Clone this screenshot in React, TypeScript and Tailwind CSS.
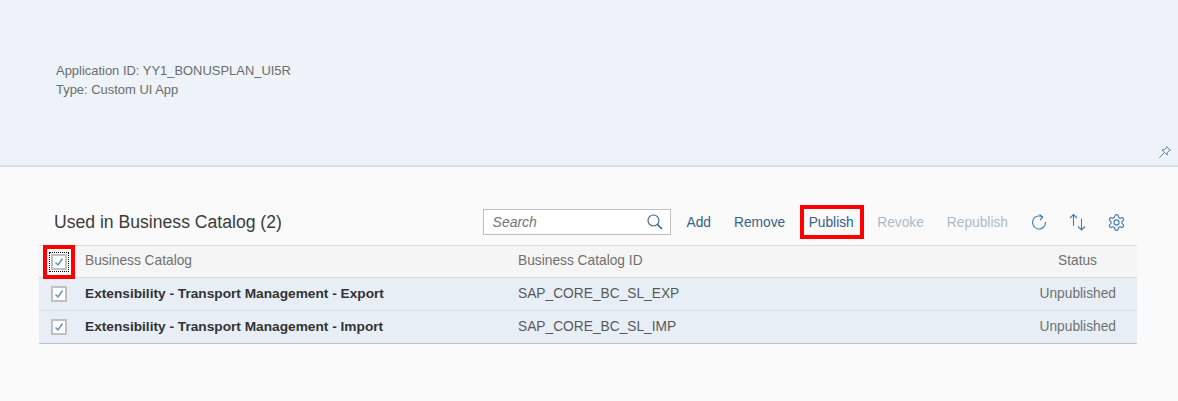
const catalogs = [
  { name: "Extensibility - Transport Management - Export", id: "SAP_CORE_BC_SL_EXP" },
  { name: "Extensibility - Transport Management - Import", id: "SAP_CORE_BC_SL_IMP" },
];

function Check({ focus }: { focus?: boolean }) {
  return (
    <span className={`flex h-4 w-4 items-center justify-center border-2 border-[#bfbfbf] bg-white ${focus ? "outline-1 outline-dotted outline-black outline-offset-1" : ""}`}>
      <svg viewBox="0 0 12 12" className="h-3 w-3" fill="none" stroke="#5a8fbd" strokeWidth="1.4">
        <path d="M2.5 6.5 L5 9 L9.5 2.5" />
      </svg>
    </span>
  );
}

function Row({ name, id }: { name: string; id: string }) {
  return (
    <div className="flex h-[33px] items-center border-b border-[#d8e0e8] bg-[#e7eef6] last:border-[#b9c4d0]">
      <div className="flex w-[40px] justify-center"><Check /></div>
      <div className="ml-[6px] w-[433px] pt-px text-[13.7px] font-bold text-[#333333]">{name}</div>
      <div className="flex-1 text-[13.75px] text-[#5a5a5a]">{id}</div>
      <div className="pr-[21px] pt-px text-[13.75px] text-[#707070]">Unpublished</div>
    </div>
  );
}

export default function App() {
  return (
    <div className="h-[401px] w-[1178px] overflow-hidden bg-[#fafafa] font-['Liberation_Sans',sans-serif]">
      <header className="flex h-[167px] flex-col border-b-2 border-[#d3e2f0] bg-[#edf3f8]">
        <div className="pl-[56px] pt-[62px] text-[12.95px] leading-[18.5px] text-[#6a6d70]">
          <p>Application ID: YY1_BONUSPLAN_UI5R</p>
          <p>Type: Custom UI App</p>
        </div>
        <div className="mt-auto flex justify-end pb-[6px] pr-[6px]">
          <svg viewBox="0 0 16 16" className="h-[14px] w-[14px]" fill="none" stroke="#427cac" strokeWidth="1">
            <path d="M9.5 1.5 L14.5 6.5 M10.5 2.5 L7 5.5 L4.5 5.5 L10.5 11.5 L10.5 9 L13.5 5.5 M7.5 8.5 L1.5 14.5" />
          </svg>
        </div>
      </header>

      <section className="ml-[39px] mt-[42px] w-[1098px]">
        <div className="mb-[10px] flex h-[26px] items-center">
          <h2 className="ml-[15px] text-[17.6px] text-[#3c3c3c]">Used in Business Catalog (2)</h2>
          <div className="ml-auto flex items-center text-[13.75px] leading-[18px] text-[#346187]">
            <div className="flex h-[26px] w-[188px] items-center justify-between border border-[#bfbfbf] bg-white pl-[9px] pr-[7px]">
              <span className="text-[14px] italic text-[#757575]">Search</span>
              <svg viewBox="0 0 16 16" className="h-4 w-4" fill="none" stroke="#346187" strokeWidth="1.1">
                <circle cx="6.5" cy="6.5" r="5.5" />
                <path d="M10.5 10.5 L15 15" strokeWidth="1.6" />
              </svg>
            </div>
            <span className="ml-[16px] pt-px">Add</span>
            <span className="ml-[23px] pt-px">Remove</span>
            <span className="ml-[15px] flex h-[34px] w-[64px] items-center justify-center border-4 border-[#ff0000] pr-[2px] pt-px">Publish</span>
            <span className="ml-[13px] pt-px text-[#a9bccd]">Revoke</span>
            <span className="ml-[23px] pt-px text-[#a9bccd]">Republish</span>
            <svg viewBox="0 0 16 16" className="ml-[23px] h-4 w-4" fill="none" stroke="#427cac" strokeWidth="1.1">
              <path d="M11.5 3 A6.5 6.5 0 1 0 14.5 8" />
              <path d="M8.5 0.5 L11.8 3 L9 6" />
            </svg>
            <svg viewBox="0 0 18 18" className="ml-[22px] h-[18px] w-[18px]" fill="none" stroke="#427cac" strokeWidth="1.1">
              <path d="M4.5 13 L4.5 1.5 M1 5 L4.5 1.5 L8 5" />
              <path d="M12.5 5.5 L12.5 17 M9 13.5 L12.5 17 L16 13.5" />
            </svg>
            <svg viewBox="0 0 24 24" className="ml-[20px] mr-[11px] h-[19px] w-[19px]" fill="none" stroke="#427cac" strokeWidth="1.5">
              <circle cx="12" cy="12" r="3.2" />
              <path d="M12.2 2h-.4a2 2 0 0 0-2 2v.2a2 2 0 0 1-1 1.7l-.4.3a2 2 0 0 1-2 0l-.2-.1a2 2 0 0 0-2.7.7l-.2.4a2 2 0 0 0 .7 2.7l.2.1a2 2 0 0 1 1 1.7v.6a2 2 0 0 1-1 1.7l-.2.1a2 2 0 0 0-.7 2.7l.2.4a2 2 0 0 0 2.7.7l.2-.1a2 2 0 0 1 2 0l.4.3a2 2 0 0 1 1 1.7v.2a2 2 0 0 0 2 2h.4a2 2 0 0 0 2-2v-.2a2 2 0 0 1 1-1.7l.4-.3a2 2 0 0 1 2 0l.2.1a2 2 0 0 0 2.7-.7l.2-.4a2 2 0 0 0-.7-2.7l-.2-.1a2 2 0 0 1-1-1.7v-.6a2 2 0 0 1 1-1.7l.2-.1a2 2 0 0 0 .7-2.7l-.2-.4a2 2 0 0 0-2.7-.7l-.2.1a2 2 0 0 1-2 0l-.4-.3a2 2 0 0 1-1-1.7V4a2 2 0 0 0-2-2z" />
            </svg>
          </div>
        </div>

        <div className="flex h-[33px] items-center border-y border-[#dddddd] bg-[#f5f5f5] text-[13.75px] text-[#707070]">
          <div className="flex w-[40px] justify-center">
            <span className="flex h-[34px] w-[32px] shrink-0 items-center justify-center border-4 border-[#ff0000] bg-white"><Check focus /></span>
          </div>
          <div className="ml-[6px] w-[433px] pb-px">Business Catalog</div>
          <div className="flex-1 pb-px">Business Catalog ID</div>
          <div className="pr-[40px]">Status</div>
        </div>
        {catalogs.map((c) => (
          <Row key={c.id} name={c.name} id={c.id} />
        ))}
      </section>
    </div>
  );
}
